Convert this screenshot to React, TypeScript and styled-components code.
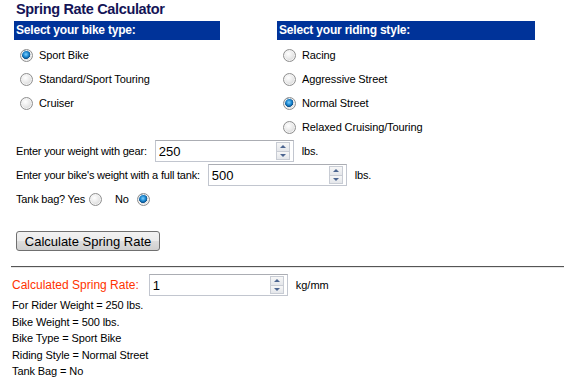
import React from "react";
import styled, { createGlobalStyle } from "styled-components";

const Global = createGlobalStyle`
  html, body { margin: 0; padding: 0; background: #fff; }
  body { font-family: "Liberation Sans", Arial, sans-serif; font-size: 11px; color: #000; }
`;

const Page = styled.div`
  padding: 0 0 0 12px;
  width: 552px;
`;

const Title = styled.h1`
  margin: 0 0 0 4px;
  height: 21px;
  font-size: 14.5px;
  line-height: 18px;
  font-weight: bold;
  letter-spacing: -0.35px;
  color: #141456;
`;

const Columns = styled.div`
  display: grid;
  grid-template-columns: 263px 263px;
  padding-left: 2px;
`;

const Column = styled.div`
  display: flex;
  flex-direction: column;
`;

const Header = styled.div<{ $w: number }>`
  width: ${(p) => p.$w}px;
  height: 19px;
  background: #003399;
  color: #fff;
  font-weight: bold;
  font-size: 12px;
  letter-spacing: -0.2px;
  line-height: 19px;
  padding-left: 2px;
  box-sizing: border-box;
  margin-bottom: 3px;
`;

const OptionRow = styled.label`
  display: flex;
  align-items: center;
  height: 24px;
  padding-left: 6px;
  gap: 6px;
  font-size: 11px;
  letter-spacing: -0.1px;
`;

const Radio = styled.input.attrs({ type: "radio" })`
  appearance: none;
  -webkit-appearance: none;
  margin: 0;
  width: 13px;
  height: 13px;
  border-radius: 50%;
  border: 1px solid #8f8f8f;
  box-sizing: border-box;
  background: radial-gradient(circle at 40% 35%, #ffffff 0%, #eaeaea 45%, #c9c9c9 100%);
  box-shadow: inset 0 0 0 1px #f4f4f4;
  flex: none;
  &:checked {
    background:
      radial-gradient(circle at 45% 40%, #7fd0ff 0%, #1a86cf 30%, #0b4f8a 48%, transparent 52%),
      radial-gradient(circle at 40% 35%, #ffffff 0%, #e6e6e6 55%, #bdbdbd 100%);
  }
`;

const FieldRow = styled.div`
  display: flex;
  align-items: center;
  height: 24px;
  padding-left: 4px;
  gap: 8px;
  font-size: 11px;
  letter-spacing: -0.2px;
`;

const SpinBox = styled.div<{ $w?: number }>`
  display: flex;
  align-items: center;
  width: ${(p) => p.$w ?? 139}px;
  height: 22px;
  box-sizing: border-box;
  border: 1px solid #c2c6cf;
  border-top-color: #abadb3;
  background: #fff;
  padding: 0 3px 0 2px;
  letter-spacing: 0;
`;

const SpinInput = styled.input`
  flex: 1;
  min-width: 0;
  border: none;
  outline: none;
  padding: 0 0 0 1px;
  font-family: "Liberation Sans", Arial, sans-serif;
  font-size: 13px;
  color: #000;
  background: transparent;
`;

const Spinner = styled.div`
  display: flex;
  flex-direction: column;
  width: 14px;
  height: 18px;
  border: 1px solid #c8ccd4;
  box-sizing: border-box;
`;

const SpinHalf = styled.div<{ $down?: boolean }>`
  flex: 1;
  display: flex;
  align-items: center;
  justify-content: center;
  background: linear-gradient(#f7f7f7, #e4e6ea);
  border-top: ${(p) => (p.$down ? "1px solid #c8ccd4" : "none")};
  &::after {
    content: "";
    width: 0;
    height: 0;
    border-left: 3px solid transparent;
    border-right: 3px solid transparent;
    ${(p) =>
      p.$down ? "border-top: 3px solid #4c6590;" : "border-bottom: 3px solid #4c6590;"}
  }
`;

const TankRow = styled(FieldRow)`
  gap: 0;
`;

const Gap = styled.span<{ $w: number }>`
  display: inline-block;
  width: ${(p) => p.$w}px;
`;

const ButtonRow = styled.div`
  padding: 20px 0 0 4px;
`;

const Button = styled.button`
  width: 144px;
  height: 20px;
  padding: 0;
  border: 1px solid #707070;
  border-radius: 3px;
  background: linear-gradient(#f2f2f2 0%, #ebebeb 50%, #dddddd 51%, #cfcfcf 100%);
  font-family: "Liberation Sans", Arial, sans-serif;
  font-size: 13px;
  color: #000;
  cursor: pointer;
`;

const Rule = styled.hr`
  margin: 15px 0 0 -1px;
  height: 0;
  border: none;
  border-top: 1px solid #555;
  border-bottom: 1px solid #e6e6e6;
`;

const ResultRow = styled.div`
  display: flex;
  align-items: center;
  height: 24px;
  margin-top: 5px;
  gap: 8px;
  font-size: 11px;
`;

const ResultLabel = styled.span`
  color: #ff3300;
  font-size: 12px;
  margin-right: 2px;
`;

const Details = styled.div`
  display: flex;
  flex-direction: column;
  font-family: "Liberation Sans", Arial, sans-serif;
  font-size: 11px;
  letter-spacing: -0.1px;
  line-height: 16.5px;
`;

function Spin({ value, width }: { value: string; width?: number }) {
  return (
    <SpinBox $w={width}>
      <SpinInput defaultValue={value} />
      <Spinner>
        <SpinHalf />
        <SpinHalf $down />
      </Spinner>
    </SpinBox>
  );
}

export default function App() {
  const bikes = ["Sport Bike", "Standard/Sport Touring", "Cruiser"];
  const styles = ["Racing", "Aggressive Street", "Normal Street", "Relaxed Cruising/Touring"];
  return (
    <>
      <Global />
      <Page>
        <Title>Spring Rate Calculator</Title>
        <Columns>
          <Column>
            <Header $w={206}>Select your bike type:</Header>
            {bikes.map((b, i) => (
              <OptionRow key={b}>
                <Radio name="bike" defaultChecked={i === 0} />
                {b}
              </OptionRow>
            ))}
          </Column>
          <Column>
            <Header $w={258}>Select your riding style:</Header>
            {styles.map((s, i) => (
              <OptionRow key={s}>
                <Radio name="style" defaultChecked={i === 2} />
                {s}
              </OptionRow>
            ))}
          </Column>
        </Columns>
        <FieldRow>
          Enter your weight with gear:
          <Spin value="250" />
          lbs.
        </FieldRow>
        <FieldRow>
          Enter your bike's weight with a full tank:
          <Spin value="500" />
          lbs.
        </FieldRow>
        <TankRow>
          Tank bag? Yes
          <Gap $w={4} />
          <Radio name="tank" />
          <Gap $w={13} />
          No
          <Gap $w={8} />
          <Radio name="tank" defaultChecked />
        </TankRow>
        <ButtonRow>
          <Button>Calculate Spring Rate</Button>
        </ButtonRow>
        <Rule />
        <ResultRow>
          <ResultLabel>Calculated Spring Rate:</ResultLabel>
          <Spin value="1" />
          kg/mm
        </ResultRow>
        <Details>
          <span>For Rider Weight = 250 lbs.</span>
          <span>Bike Weight = 500 lbs.</span>
          <span>Bike Type = Sport Bike</span>
          <span>Riding Style = Normal Street</span>
          <span>Tank Bag = No</span>
        </Details>
      </Page>
    </>
  );
}
